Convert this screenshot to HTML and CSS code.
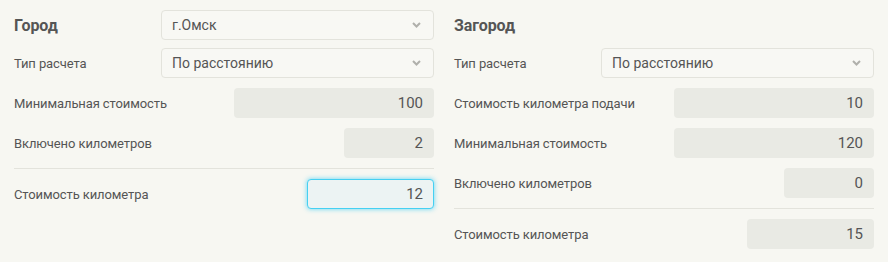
FILE: index.html
```html
<!DOCTYPE html>
<html lang="ru">
<head>
<meta charset="utf-8">
<link rel="stylesheet" href="styles.css">
</head>
<body>
<div class="page">
  <section class="col">
    <div class="row">
      <h2 class="title">Город</h2>
      <div class="select"><span>г.Омск</span><svg class="chev" width="9" height="6" viewBox="0 0 9 6"><polyline points="1,1 4.5,4.5 8,1" fill="none" stroke="#b0b0ab" stroke-width="2"/></svg></div>
    </div>
    <div class="row">
      <span class="label">Тип расчета</span>
      <div class="select"><span>По расстоянию</span><svg class="chev" width="9" height="6" viewBox="0 0 9 6"><polyline points="1,1 4.5,4.5 8,1" fill="none" stroke="#b0b0ab" stroke-width="2"/></svg></div>
    </div>
    <div class="row">
      <span class="label">Минимальная стоимость</span>
      <div class="input w-lg">100</div>
    </div>
    <div class="row">
      <span class="label">Включено километров</span>
      <div class="input w-sm">2</div>
    </div>
    <hr class="divider">
    <div class="row">
      <span class="label">Стоимость километра</span>
      <div class="input w-md focus">12</div>
    </div>
  </section>
  <section class="col">
    <div class="row">
      <h2 class="title">Загород</h2>
    </div>
    <div class="row">
      <span class="label">Тип расчета</span>
      <div class="select"><span>По расстоянию</span><svg class="chev" width="9" height="6" viewBox="0 0 9 6"><polyline points="1,1 4.5,4.5 8,1" fill="none" stroke="#b0b0ab" stroke-width="2"/></svg></div>
    </div>
    <div class="row">
      <span class="label">Стоимость километра подачи</span>
      <div class="input w-lg">10</div>
    </div>
    <div class="row">
      <span class="label">Минимальная стоимость</span>
      <div class="input w-lg">120</div>
    </div>
    <div class="row">
      <span class="label">Включено километров</span>
      <div class="input w-sm">0</div>
    </div>
    <hr class="divider">
    <div class="row">
      <span class="label">Стоимость километра</span>
      <div class="input w-md">15</div>
    </div>
  </section>
</div>
</body>
</html>
```

FILE: styles.css
```css
html, body {
  margin: 0;
  padding: 0;
  background: #f7f7f2;
}
body {
  font-family: Roboto, "Liberation Sans", sans-serif;
  color: #555;
  width: 888px;
  height: 262px;
  overflow: hidden;
}
.page {
  display: grid;
  grid-template-columns: 420px 420px;
  column-gap: 20px;
  padding: 10px 14px 0 14px;
}
.col {
  display: flex;
  flex-direction: column;
  gap: 10px;
}
.col > .row:first-child {
  margin-bottom: -2px;
}
.row {
  display: flex;
  align-items: center;
  justify-content: space-between;
  height: 30px;
}
.title {
  margin: 0;
  font-size: 16px;
  font-weight: 700;
  letter-spacing: -0.1px;
  color: #555;
}
.label {
  font-size: 13px;
  letter-spacing: -0.1px;
  color: #555;
}
.select {
  box-sizing: border-box;
  width: 273px;
  height: 30px;
  border: 1px solid #e3e3dc;
  border-radius: 4px;
  background: #f8f8f4;
  display: flex;
  align-items: center;
  justify-content: space-between;
  padding: 0 12px 0 10px;
  font-size: 14px;
  color: #555;
}
.chev {
  display: block;
}
.input {
  box-sizing: border-box;
  height: 30px;
  border-radius: 4px;
  background: #e9eae4;
  display: flex;
  align-items: center;
  justify-content: flex-end;
  padding-right: 11px;
  font-size: 15px;
  color: #555;
}
.w-lg { width: 200px; }
.w-sm { width: 90px; }
.w-md { width: 127px; }
.input.focus {
  border: 1px solid #45d0f2;
  background: #ecf3f3;
  box-shadow: 0 0 5px rgba(70, 208, 245, 0.85);
  padding-right: 10px;
}
.divider {
  margin: 0;
  border: 0;
  border-top: 1px solid #e3e3dc;
  height: 0;
}
```
